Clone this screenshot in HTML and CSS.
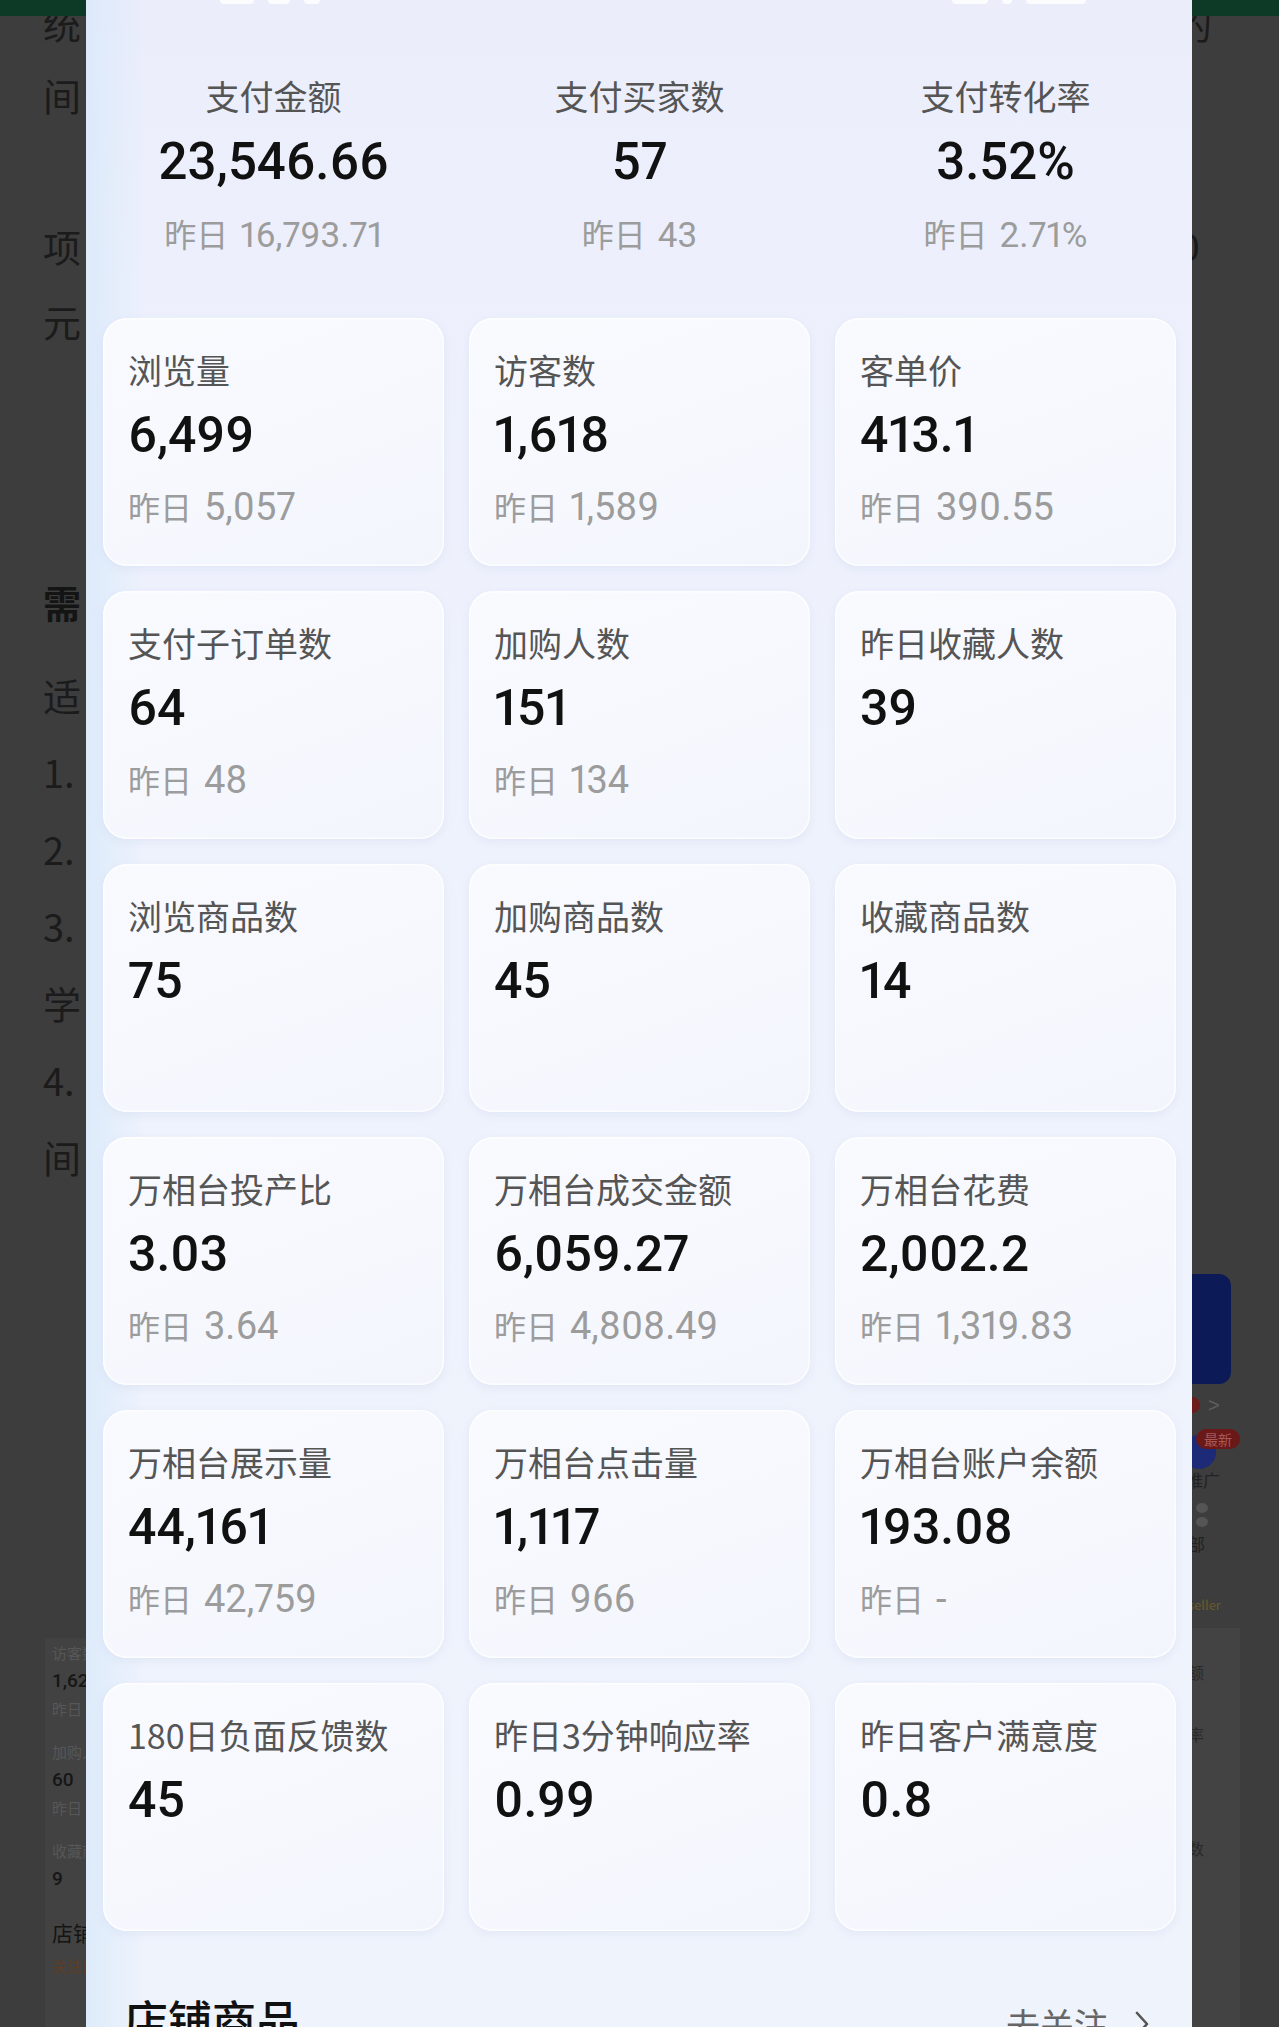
FILE: index.html
```html
<!DOCTYPE html>
<html lang="zh-CN">
<head>
<meta charset="utf-8">
<title>店铺数据</title>
<link rel="stylesheet" href="styles.css">
</head>
<body>
<div class="screen">
  <aside class="side side-left">
    <div class="appbar"></div>
    <div class="article">
      <p class="para p1">统<br>间</p>
      <p class="para p2">项<br>元</p>
      <p class="para p3 bold">需</p>
      <p class="para p4">适<br>1.<br>2.<br>3.<br>学<br>4.<br>间</p>
    </div>
    <div class="bg-card">
      <div class="mini"><div class="mini-l">访客数</div><div class="mini-v">1,624</div><div class="mini-l">昨日 1</div></div>
      <div class="mini"><div class="mini-l">加购人</div><div class="mini-v">60</div><div class="mini-l">昨日</div></div>
      <div class="mini"><div class="mini-l">收藏商</div><div class="mini-v">9</div></div>
      <div class="mini-h">店铺商</div>
      <div class="mini-o">关注商</div>
    </div>
  </aside>

  <main class="sheet">
    <div class="status">
      <span class="st st-a"></span><span class="st st-b"></span><span class="st st-c"></span>
      <span class="st-gap"></span>
      <span class="st st-d"></span><span class="st st-e"></span><span class="st st-f"></span>
    </div>

    <section class="summary">
      <div class="sum">
        <div class="sum-label">支付金额</div>
        <div class="sum-value">23,546.66</div>
        <div class="sum-prev"><span class="yd">昨日</span>16,793.71</div>
      </div>
      <div class="sum">
        <div class="sum-label">支付买家数</div>
        <div class="sum-value">57</div>
        <div class="sum-prev"><span class="yd">昨日</span>43</div>
      </div>
      <div class="sum">
        <div class="sum-label">支付转化率</div>
        <div class="sum-value">3.52%</div>
        <div class="sum-prev"><span class="yd">昨日</span>2.71%</div>
      </div>
    </section>

    <section class="grid">
      <div class="card"><div class="c-label">浏览量</div><div class="c-value">6,499</div><div class="c-prev"><span class="yd">昨日</span>5,057</div></div>
      <div class="card"><div class="c-label">访客数</div><div class="c-value">1,618</div><div class="c-prev"><span class="yd">昨日</span>1,589</div></div>
      <div class="card"><div class="c-label">客单价</div><div class="c-value">413.1</div><div class="c-prev"><span class="yd">昨日</span>390.55</div></div>

      <div class="card"><div class="c-label">支付子订单数</div><div class="c-value">64</div><div class="c-prev"><span class="yd">昨日</span>48</div></div>
      <div class="card"><div class="c-label">加购人数</div><div class="c-value">151</div><div class="c-prev"><span class="yd">昨日</span>134</div></div>
      <div class="card"><div class="c-label">昨日收藏人数</div><div class="c-value">39</div></div>

      <div class="card"><div class="c-label">浏览商品数</div><div class="c-value">75</div></div>
      <div class="card"><div class="c-label">加购商品数</div><div class="c-value">45</div></div>
      <div class="card"><div class="c-label">收藏商品数</div><div class="c-value">14</div></div>

      <div class="card"><div class="c-label">万相台投产比</div><div class="c-value">3.03</div><div class="c-prev"><span class="yd">昨日</span>3.64</div></div>
      <div class="card"><div class="c-label">万相台成交金额</div><div class="c-value">6,059.27</div><div class="c-prev"><span class="yd">昨日</span>4,808.49</div></div>
      <div class="card"><div class="c-label">万相台花费</div><div class="c-value">2,002.2</div><div class="c-prev"><span class="yd">昨日</span>1,319.83</div></div>

      <div class="card"><div class="c-label">万相台展示量</div><div class="c-value">44,161</div><div class="c-prev"><span class="yd">昨日</span>42,759</div></div>
      <div class="card"><div class="c-label">万相台点击量</div><div class="c-value">1,117</div><div class="c-prev"><span class="yd">昨日</span>966</div></div>
      <div class="card"><div class="c-label">万相台账户余额</div><div class="c-value">193.08</div><div class="c-prev"><span class="yd">昨日</span>-</div></div>

      <div class="card"><div class="c-label">180日负面反馈数</div><div class="c-value">45</div></div>
      <div class="card"><div class="c-label">昨日3分钟响应率</div><div class="c-value">0.99</div></div>
      <div class="card"><div class="c-label">昨日客户满意度</div><div class="c-value">0.8</div></div>
    </section>

    <div class="sec-head">
      <h2 class="sec-title">店铺商品</h2>
      <div class="sec-link">去关注
        <svg class="chev" viewBox="0 0 16 28" width="16" height="28"><path d="M3 3 L13 14 L3 25" fill="none" stroke="#555" stroke-width="2.6" stroke-linecap="round" stroke-linejoin="round"/></svg>
      </div>
    </div>
  </main>

  <aside class="side side-right">
    <div class="appbar"></div>
    <div class="r-text r-de">的</div>
    <div class="r-text r-zero">0</div>
    <div class="r-banner"></div>
    <div class="r-row"><span class="r-dot"></span><span class="r-gt">&gt;</span></div>
    <div class="r-badge-row"><span class="r-circle"></span><span class="r-badge">最新</span></div>
    <div class="r-small r-s1">推广</div>
    <div class="r-dots"><span></span><span></span></div>
    <div class="r-small r-s2">部</div>
    <div class="r-yel">seller</div>
    <div class="r-card">
      <div class="r-ct r-c1">额</div>
      <div class="r-ct r-c2">率</div>
      <div class="r-ct r-c3">数</div>
    </div>
  </aside>
</div>
</body>
</html>
```

FILE: styles.css
```css
* { box-sizing: border-box; }
html, body { margin: 0; padding: 0; }
body {
  background: #3e3e3e;
  font-family: "Noto Sans CJK SC", "Noto Sans", sans-serif;
}
.screen {
  display: grid;
  grid-template-columns: 86px 1106px 87px;
  width: 1279px;
  height: 2027px;
  overflow: hidden;
}

/* ---------- dimmed background page ---------- */
.side {
  background: #3d3d3d;
  overflow: hidden;
  color: #1b1b1b;
  display: flex;
  flex-direction: column;
}
.appbar {
  height: 16px;
  flex: none;
  background: #0c3a27;
  position: relative;
  z-index: 2;
}
.article { padding-left: 43px; margin-top: -16px; }
.para {
  margin: 0;
  font-size: 38px;
  white-space: nowrap;
}
.p1 { line-height: 72px; margin-top: -13px; }
.p2 { line-height: 75px; margin-top: 77px; }
.p3 { line-height: 76px; margin-top: 206px; font-weight: 700; color: #141414; }
.p4 { line-height: 77px; margin-top: 16px; }

.bg-card {
  margin-top: 443px;
  margin-left: 45px;
  flex: 1;
  background: #424242;
  padding: 1px 0 0 7px;
  white-space: nowrap;
}
.mini { margin-bottom: 15px; }
.mini-l { font-size: 15px; line-height: 28px; color: #575757; }
.mini-v { font-family: "Roboto", sans-serif; font-size: 19px; line-height: 28px; color: #161616; font-weight: 500; }
.mini-h { margin-top: 25px; font-size: 21px; line-height: 28px; color: #141414; }
.mini-o { margin-top: 6px; font-size: 15px; line-height: 28px; color: #5e3d22; }

.side-right { position: relative; }
.r-text { font-size: 38px; line-height: 46px; white-space: nowrap; }
.r-de { margin-top: -16px; margin-left: -18px; }
.r-zero { margin-top: 177px; margin-left: -14px; font-family: "Noto Sans", sans-serif; }
.r-banner {
  margin-top: 1005px;
  margin-left: -20px;
  width: 59px;
  height: 110px;
  background: #0c1b57;
  border-radius: 12px;
}
.r-row { display: flex; align-items: center; height: 28px; margin-top: 7px; gap: 8px; }
.r-dot { width: 16px; height: 16px; border-radius: 50%; background: #6d1b1b; margin-left: -8px; }
.r-gt { color: #5e5e5e; font-size: 20px; font-family: "Liberation Sans", sans-serif; }
.r-badge-row { position: relative; height: 36px; margin-top: 10px; }
.r-circle { position: absolute; left: -10px; top: 6px; width: 34px; height: 34px; border-radius: 50%; background: #1c2a78; }
.r-badge {
  position: absolute; left: 4px; top: 0;
  background: #6a1818; color: #a6585a;
  font-size: 14px; line-height: 20px; padding: 0 8px; border-radius: 10px;
}
.r-small { font-size: 17px; line-height: 26px; color: #222; white-space: nowrap; }
.r-s1 { margin-top: 2px; margin-left: -6px; }
.r-dots { display: flex; flex-direction: column; gap: 4px; margin: 10px 0 0 4px; }
.r-dots span { width: 12px; height: 10px; border-radius: 50%; background: #555; }
.r-s2 { margin-top: 4px; margin-left: -4px; }
.r-yel { margin-top: 38px; font-size: 13px; color: #6a5a2c; margin-left: -4px; }
.r-card { margin-top: 14px; flex: 1; width: 48px; background: #434343; }
.r-ct { font-size: 16px; color: #2a2a2a; line-height: 24px; margin-left: -4px; }
.r-c1 { margin-top: 32px; }
.r-c2 { margin-top: 38px; }
.r-c3 { margin-top: 90px; }

/* ---------- sheet ---------- */
.sheet {
  background:
    linear-gradient(90deg, rgba(214, 232, 250, 0.7) 0, rgba(230, 240, 252, 0) 60px),
    linear-gradient(180deg, #ebedfb 0%, #edf0fc 14%, #eef2fc 40%, #eff3fc 100%);
  padding: 0 16px 0 17px;
  overflow: hidden;
}
.status { display: flex; align-items: flex-start; height: 8px; padding-left: 117px; gap: 14px; }
.st { display: block; height: 4px; background: rgba(255,255,255,0.8); border-radius: 0 0 6px 6px; }
.st-a { width: 34px; }
.st-b { width: 22px; }
.st-c { width: 16px; }
.st-gap { flex: 1; }
.st-d { width: 36px; }
.st-e { width: 10px; }
.st-f { width: 60px; margin-right: 90px; }

.summary {
  margin-top: 66px;
  display: grid;
  grid-template-columns: repeat(3, 341px);
  column-gap: 25px;
  text-align: center;
}
.sum-label { font-size: 34px; line-height: 44px; color: #555; }
.sum-value {
  margin-top: 14px;
  font-family: "Roboto", "Noto Sans CJK SC", sans-serif;
  font-variant-numeric: proportional-nums;
  font-size: 51px; line-height: 60px; font-weight: 500; color: #111;
}
.sum-prev {
  margin-top: 19px;
  font-family: "Roboto", "Noto Sans CJK SC", sans-serif;
  font-variant-numeric: proportional-nums;
  font-size: 35px; line-height: 44px; color: #9c9c9c;
}
.yd { font-family: "Noto Sans CJK SC", sans-serif; font-size: 32px; margin-right: 12px; }

.grid {
  margin-top: 60px;
  display: grid;
  grid-template-columns: repeat(3, 341px);
  grid-auto-rows: 248px;
  gap: 25px;
}
.card {
  border-radius: 24px;
  background: linear-gradient(160deg, #f9fafe 0%, #f6f8fe 55%, #f3f5fd 100%);
  box-shadow: 0 3px 8px rgba(195, 205, 232, 0.28), inset 0 0 0 1.5px rgba(255, 255, 255, 0.75);
  padding: 30px 25px 0;
}
.c-label { font-size: 34px; line-height: 44px; color: #555; white-space: nowrap; }
.c-value {
  margin-top: 13px;
  font-family: "Roboto", sans-serif;
  font-variant-numeric: proportional-nums;
  font-size: 50px; line-height: 60px; font-weight: 500; color: #111;
}
.c-prev {
  margin-top: 19px;
  font-family: "Roboto", "Noto Sans CJK SC", sans-serif;
  font-variant-numeric: proportional-nums;
  font-size: 38px; line-height: 44px; color: #9c9c9c;
}

.sec-head {
  margin-top: 58px;
  display: flex;
  justify-content: space-between;
  align-items: baseline;
  padding: 0 26px 0 21px;
}
.sec-title { margin: 0; font-size: 44px; line-height: 60px; font-weight: 500; color: #111; }
.sec-link { display: flex; align-items: center; gap: 26px; font-size: 34px; line-height: 44px; color: #666; }
.chev { display: block; }
```
